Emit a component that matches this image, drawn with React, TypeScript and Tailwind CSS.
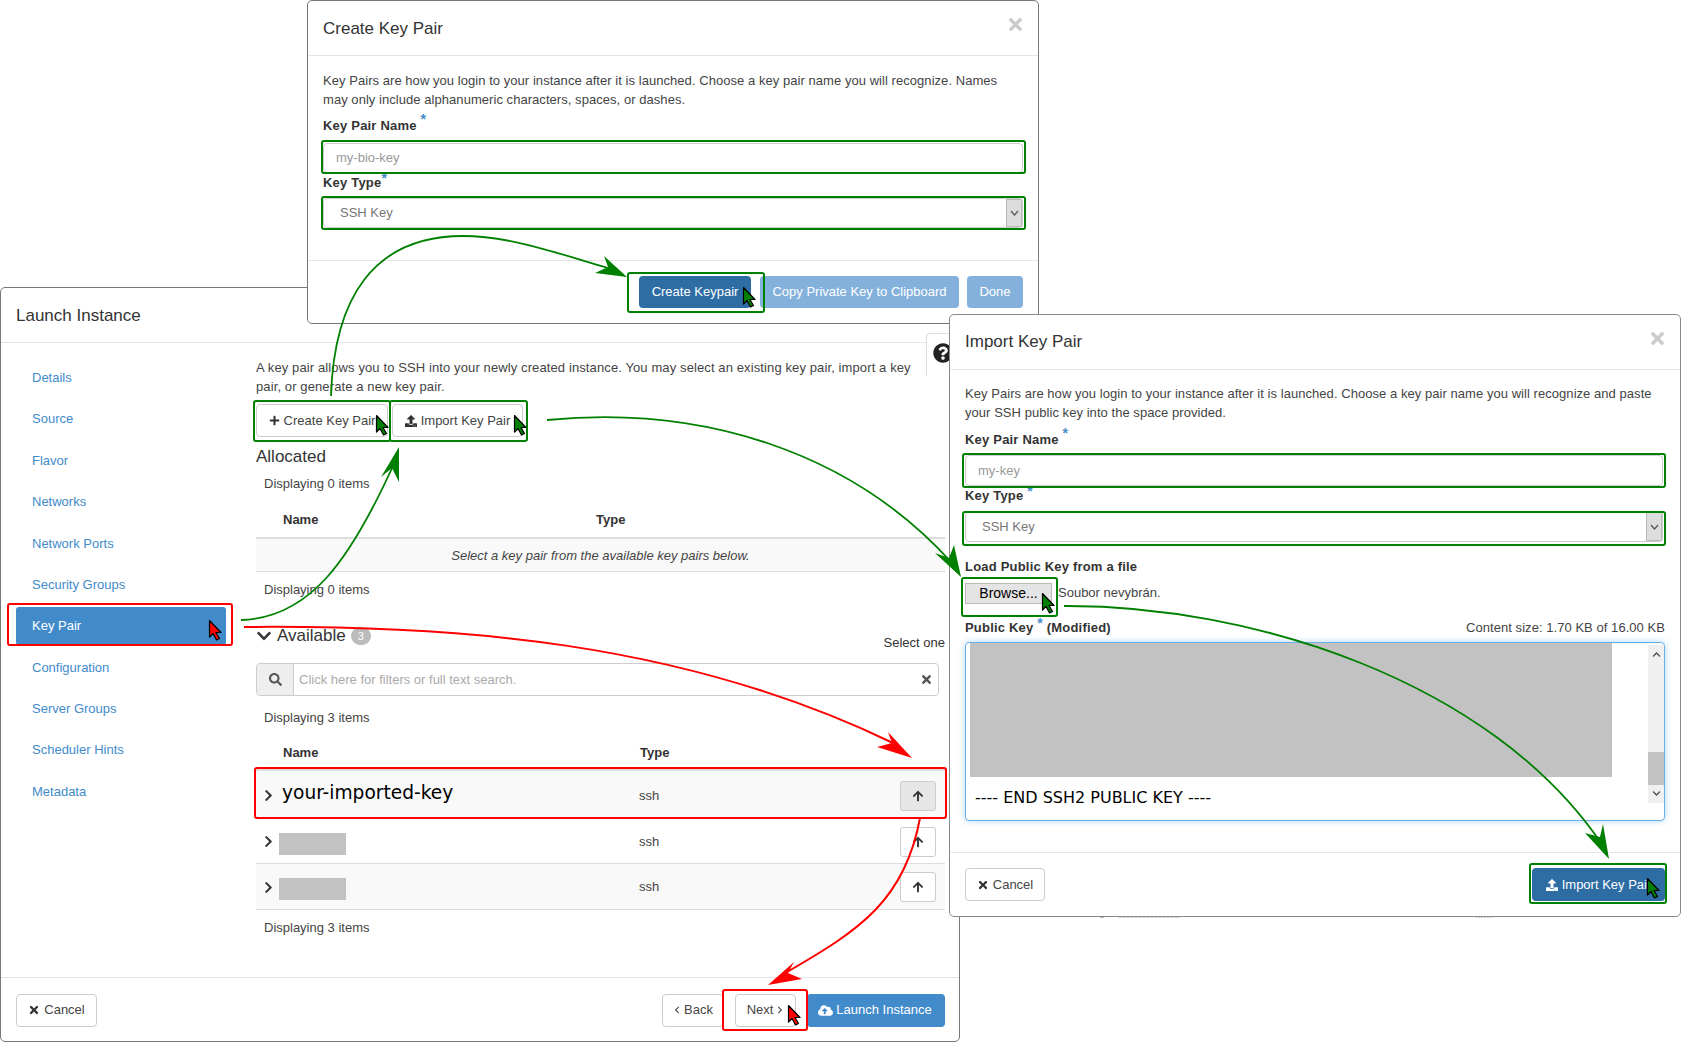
import React from "react";
import {
  FaPlus, FaUpload, FaChevronDown, FaChevronRight, FaSearch, FaTimes, FaArrowUp, FaCloudUploadAlt, FaQuestionCircle, FaChevronLeft,
} from "react-icons/fa";

const GREEN = "#008000";
const RED = "#ff0000";

function Cursor({ x, y, color }: { x: number; y: number; color: string }) {
  return (
    <g transform={`translate(${x} ${y})`}>
      <polygon points="0.5,0.5 12,12.5 7,12.5 10.5,18.5 7.5,20 4,13.5 0.5,17" fill={color} stroke="#000" strokeWidth="1.2" strokeLinejoin="round" />
    </g>
  );
}

function Box({ x, y, w, h, color }: { x: number; y: number; w: number; h: number; color: string }) {
  return <rect x={x} y={y} width={w} height={h} rx="2" fill="none" stroke={color} strokeWidth="2" />;
}

function Annotations() {
  return (
    <svg className="absolute left-0 top-0 pointer-events-none" width="1681" height="1042" viewBox="0 0 1681 1042">
      <line x1="1119" y1="917" x2="1180" y2="917" stroke="#999" strokeWidth="1" strokeDasharray="3 1" />
      <line x1="1100" y1="917" x2="1104" y2="917" stroke="#777" strokeWidth="1" />
      <line x1="1475" y1="917" x2="1494" y2="917" stroke="#999" strokeWidth="1" strokeDasharray="2 1" />

      <Box x={322} y={141} w={703} h={32} color={GREEN} />
      <Box x={322} y={197} w={703} h={32} color={GREEN} />
      <Box x={628} y={273} w={136} h={39} color={GREEN} />
      <Box x={254} y={401} w={136} h={40} color={GREEN} />
      <Box x={390} y={401} w={137} h={40} color={GREEN} />
      <Box x={963} y={454} w={702} h={33} color={GREEN} />
      <Box x={963} y={512} w={702} h={33} color={GREEN} />
      <Box x={962} y={578} w={95} h={38} color={GREEN} />
      <Box x={1530} y={864} w={136} h={39} color={GREEN} />
      <Box x={8} y={604} w={224} h={41} color={RED} />
      <Box x={255} y={768} w={691} h={50} color={RED} />
      <Box x={723} y={990} w={84} h={40} color={RED} />

      <path d="M331 396 C 334 300, 372 236, 463 236 C 510 236, 560 254, 608 268" fill="none" stroke={GREEN} strokeWidth="1.8" />
      <polygon points="627,277 604,256 608,267 595,273" fill={GREEN} />
      <path d="M241 620 C 310 618, 350 560, 393 466" fill="none" stroke={GREEN} strokeWidth="1.8" />
      <polygon points="399,447 381,477 392,468 399,482" fill={GREEN} />
      <path d="M547 420 C 700 405, 850 450, 952 563" fill="none" stroke={GREEN} strokeWidth="1.8" />
      <polygon points="961,577 954,545 949,558 935,553" fill={GREEN} />
      <path d="M1064 606 C 1250 605, 1490 680, 1601 843" fill="none" stroke={GREEN} strokeWidth="1.8" />
      <polygon points="1609,859 1603,824 1600,837 1585,833" fill={GREEN} />
      <path d="M244 627 C 450 625, 680 640, 893 743" fill="none" stroke={RED} strokeWidth="2" />
      <polygon points="912,758 888,732 892,743 877,747" fill={RED} />
      <path d="M920 818 C 905 900, 860 930, 787 972" fill="none" stroke={RED} strokeWidth="2" />
      <polygon points="768,985 794,962 788,973 802,979" fill={RED} />

      <Cursor x={376} y={415} color={GREEN} />
      <Cursor x={514} y={415} color={GREEN} />
      <Cursor x={743} y={287} color={GREEN} />
      <Cursor x={1042} y={593} color={GREEN} />
      <Cursor x={1647} y={878} color={GREEN} />
      <Cursor x={209} y={620} color={RED} />
      <Cursor x={788} y={1005} color={RED} />
    </svg>
  );
}

function Star({ className }: { className: string }) {
  return <span className={`text-[#428bca] text-[14px] leading-none align-top ${className}`}>*</span>;
}

function SelectLike({ textX }: { textX: string }) {
  return (
    <div className="flex h-full items-center bg-white rounded-sm border border-[#ccc]">
      <span className={`flex-1 text-[13px] text-[#777] ${textX}`}>SSH Key</span>
      <span className="flex h-full w-[16px] items-center justify-center bg-[#ddd] border border-[#bbb]">
        <svg width="9" height="6" viewBox="0 0 9 6"><path d="M1 1 L4.5 5 L8 1" fill="none" stroke="#555" strokeWidth="1.2" /></svg>
      </span>
    </div>
  );
}

function Btn({ children, className = "" }: { children: React.ReactNode; className?: string }) {
  return (
    <div className={`flex h-[33px] items-center justify-center rounded-[4px] border border-[#ccc] bg-white text-[13px] text-[#444] ${className}`}>
      {children}
    </div>
  );
}

function CreateWindow() {
  return (
    <section className="absolute left-[307px] top-0 flex h-[324px] w-[732px] flex-col rounded-[5px] border border-[#777] bg-white">
      <header className="relative h-[55px] shrink-0 border-b border-[#e5e5e5] pl-[15px] pt-[18px] text-[17px] leading-[20px] text-[#333]">
        Create Key Pair
        <FaTimes className="absolute right-[13px] top-[14px] text-[#ccc]" size={19} />
      </header>
      <div className="px-[15px] pt-[15px] text-[13px] text-[#444]">
        <p className="leading-[19px] tracking-[0.05px]">
          Key Pairs are how you login to your instance after it is launched. Choose a key pair name you will recognize. Names
          <br />
          may only include alphanumeric characters, spaces, or dashes.
        </p>
        <div className="mt-[8px] h-[18px] font-bold leading-[18px] tracking-[0.2px] text-[#333]">Key Pair Name <Star className="relative -top-[5px]" /></div>
        <div className="mt-[8px] flex h-[30px] w-[700px] items-center rounded-sm border border-[#ccc] pl-[12px] text-[13px] text-[#999]">my-bio-key</div>
        <div className="mt-[2px] h-[16px] font-bold leading-[16px] tracking-[0.2px] text-[#333]">Key Type<Star className="relative -top-[4px]" /></div>
        <div className="mt-[7px] h-[30px] w-[700px]"><SelectLike textX="pl-[16px]" /></div>
      </div>
      <footer className="mt-auto flex h-[63px] shrink-0 justify-end border-t border-[#e5e5e5] pr-[15px] pt-[15px] text-[13px] text-white">
        <div className="mr-[9px] flex h-[32px] w-[112px] items-center justify-center rounded-[4px] bg-[#2e6da4]">Create Keypair</div>
        <div className="mr-[8px] flex h-[32px] w-[199px] items-center justify-center rounded-[4px] bg-[#84b1dc]">Copy Private Key to Clipboard</div>
        <div className="flex h-[32px] w-[56px] items-center justify-center rounded-[4px] bg-[#84b1dc]">Done</div>
      </footer>
    </section>
  );
}

function Nav() {
  const items = ["Details", "Source", "Flavor", "Networks", "Network Ports", "Security Groups", "Key Pair", "Configuration", "Server Groups", "Scheduler Hints", "Metadata"];
  return (
    <nav className="w-[255px] shrink-0 pl-[15px] pt-[14px] text-[13px]">
      {items.map((n) =>
        n === "Key Pair" ? (
          <div key={n} className="flex h-[41.4px] items-center">
            <div className="flex h-[38px] w-[210px] items-center rounded-[3px] bg-[#428bca] pl-[16px] text-white">{n}</div>
          </div>
        ) : (
          <div key={n} className="flex h-[41.4px] items-center pl-[16px] text-[#428bca]">{n}</div>
        )
      )}
    </nav>
  );
}

function KeyRow({ name, shade, active }: { name: React.ReactNode; shade?: boolean; active?: boolean }) {
  return (
    <div className={`flex flex-1 items-center border-b border-[#ddd] ${active ? "pt-[3px]" : "pt-[1px]"} ${shade ? "bg-[#f9f9f9]" : ""}`}>
      <FaChevronRight className="ml-[6px] text-[#333]" size={13} />
      <div className="ml-[4px] w-[360px]">{name}</div>
      <div className="w-[261px] text-[13px] text-[#444]">ssh</div>
      <div className={`flex h-[30px] w-[36px] items-center justify-center rounded-[3px] border border-[#ccc] ${active ? "bg-[#e6e6e6]" : "bg-white"}`}>
        <FaArrowUp className="text-[#333]" size={12} />
      </div>
    </div>
  );
}

function Redacted() {
  return <div className="relative top-[2px] h-[22px] w-[67px] bg-[#c2c2c2]" />;
}

function LaunchWindow() {
  return (
    <section className="absolute left-0 top-[287px] flex h-[755px] w-[960px] flex-col rounded-[5px] border border-[#777] bg-white">
      <header className="h-[55px] shrink-0 border-b border-[#e5e5e5] pl-[15px] pt-[18px] text-[17px] leading-[20px] text-[#333]">Launch Instance</header>
      <div className="relative flex flex-1">
        <Nav />
        <div className="absolute right-[1px] top-[-10px] flex h-[43px] w-[32px] items-start rounded-tl-[4px] border-l border-t border-[#ddd] bg-white pl-[6px] pt-[9px]">
          <FaQuestionCircle className="text-[#222]" size={20} />
        </div>
        <div className="w-[689px] text-[13px] text-[#444]">
          <p className="pt-[15px] leading-[19px] tracking-[0.11px]">
            A key pair allows you to SSH into your newly created instance. You may select an existing key pair, import a key
            <br />
            pair, or generate a new key pair.
          </p>
          <div className="mt-[8px] flex gap-[4px]">
            <Btn className="w-[132px] gap-[4px]"><FaPlus size={11} className="text-[#333]" />Create Key Pair</Btn>
            <Btn className="w-[131px] gap-[4px]"><FaUpload size={12} className="text-[#333]" />Import Key Pair</Btn>
          </div>
          <div className="mt-[7px] h-[26px] text-[17px] leading-[26px] text-[#333]">Allocated</div>
          <div className="mt-[5px] h-[18px] pl-[8px] leading-[18px]">Displaying 0 items</div>
          <div className="flex h-[46px] border-b-2 border-[#ddd] pt-[18px] font-bold leading-[18px] text-[#333]">
            <div className="ml-[27px] w-[313px]">Name</div>
            <div>Type</div>
          </div>
          <div className="flex h-[33px] items-center justify-center border-b border-[#ddd] bg-[#f9f9f9] pt-[2px] italic text-[#444]">
            Select a key pair from the available key pairs below.
          </div>
          <div className="mt-[9px] h-[18px] pl-[8px] leading-[18px]">Displaying 0 items</div>
          <div className="mt-[24px] flex h-[26px] items-center">
            <FaChevronDown className="mr-[5px] text-[#333]" size={16} />
            <span className="text-[17px] text-[#333]">Available</span>
            <span className="ml-[5px] flex h-[18px] w-[20px] items-center justify-center rounded-full bg-[#bbb] text-[11px] text-white">3</span>
            <span className="relative top-[7px] ml-auto text-[#333]">Select one</span>
          </div>
          <div className="mt-[14px] flex h-[33px] w-[683px] items-center rounded-[4px] border border-[#ccc]">
            <div className="flex h-full w-[37px] items-center justify-center rounded-l-[4px] border-r border-[#ccc] bg-[#eee]">
              <FaSearch className="text-[#555]" size={13} />
            </div>
            <span className="flex-1 pl-[5px] text-[#aaa]">Click here for filters or full text search.</span>
            <FaTimes className="mr-[5px] text-[#555]" size={13} />
          </div>
          <div className="mt-[13px] h-[18px] pl-[8px] leading-[18px]">Displaying 3 items</div>
          <div className="flex h-[44px] border-b-2 border-[#ddd] pt-[17px] font-bold leading-[18px] text-[#333]">
            <div className="ml-[27px] w-[357px]">Name</div>
            <div>Type</div>
          </div>
          <div className="flex h-[139px] flex-col">
            <KeyRow shade active name={<span className="relative -top-[3px] left-[3px] [font-family:'DejaVu_Sans',sans-serif] text-[18.6px] text-black">your-imported-key</span>} />
            <KeyRow name={<Redacted />} />
            <KeyRow shade name={<Redacted />} />
          </div>
          <div className="mt-[9px] h-[18px] pl-[8px] leading-[18px]">Displaying 3 items</div>
        </div>
      </div>
      <footer className="flex h-[64px] shrink-0 items-center justify-between border-t border-[#e5e5e5] pl-[15px] pr-[14px] pt-[1px]">
        <Btn className="w-[81px] gap-[4px]"><FaTimes size={12} className="text-[#333]" />Cancel</Btn>
        <div className="flex">
          <Btn className="mr-[11px] w-[62px] gap-[3px]"><FaChevronLeft size={8} className="text-[#555]" />Back</Btn>
          <Btn className="mr-[11px] w-[61px] gap-[3px]">Next<FaChevronRight size={8} className="text-[#555]" /></Btn>
          <div className="flex h-[33px] w-[138px] items-center justify-center gap-[3px] rounded-[4px] bg-[#428bca] pr-[2px] text-[13px] text-white"><FaCloudUploadAlt size={15} />Launch Instance</div>
        </div>
      </footer>
    </section>
  );
}

function ImportWindow() {
  return (
    <section className="absolute left-[949px] top-[314px] flex h-[603px] w-[732px] flex-col rounded-[5px] border border-[#888] bg-white">
      <header className="relative h-[55px] shrink-0 border-b border-[#e5e5e5] pl-[15px] pt-[17px] text-[17px] leading-[20px] text-[#333]">
        Import Key Pair
        <FaTimes className="absolute right-[13px] top-[14px] text-[#ccc]" size={19} />
      </header>
      <div className="px-[15px] pt-[14px] text-[13px] text-[#444]">
        <p className="leading-[19px] tracking-[0.05px]">
          Key Pairs are how you login to your instance after it is launched. Choose a key pair name you will recognize and paste
          <br />
          your SSH public key into the space provided.
        </p>
        <div className="mt-[9px] h-[18px] font-bold leading-[18px] tracking-[0.2px] text-[#333]">Key Pair Name <Star className="relative -top-[5px]" /></div>
        <div className="mt-[6px] flex h-[31px] w-[698px] items-center rounded-sm border border-[#ccc] pl-[12px] text-[#999]">my-key</div>
        <div className="mt-[2px] h-[16px] font-bold leading-[16px] tracking-[0.2px] text-[#333]">Key Type <Star className="relative -top-[4px]" /></div>
        <div className="mt-[7px] h-[31px] w-[698px]"><SelectLike textX="pl-[16px]" /></div>
        <div className="mt-[16px] h-[18px] font-bold leading-[18px] tracking-[0.2px] text-[#333]">Load Public Key from a file</div>
        <div className="mt-[7px] flex h-[20px] items-center">
          <div className="flex h-[21px] w-[87px] items-center justify-center border border-[#bbb] bg-[#e4e4e4] text-[14px] text-black">Browse...</div>
          <span className="ml-[6px] text-[#444]">Soubor nevybrán.</span>
        </div>
        <div className="mt-[16px] flex h-[18px] justify-between leading-[18px]">
          <span className="font-bold tracking-[0.2px] text-[#333]">Public Key <Star className="relative -top-[3px]" /> (Modified)</span>
          <span className="tracking-[0.05px] text-[#444]">Content size: 1.70 KB of 16.00 KB</span>
        </div>
        <div className="relative mt-[5px] h-[179px] w-[700px] rounded-[4px] border border-[#66afe9] shadow-[0_0_6px_rgba(102,175,233,0.5)]">
          <div className="ml-[4px] h-[134px] w-[642px] bg-[#c2c2c2]" />
          <div className="mt-[11px] pl-[9px] [font-family:'DejaVu_Sans',sans-serif] text-[16px] leading-[20px] text-black">---- END SSH2 PUBLIC KEY ----</div>
          <div className="absolute right-0 top-[2px] flex h-[158px] w-[16px] flex-col items-center bg-[#f0f0f0]">
            <FaChevronDown className="mt-[5px] rotate-180 text-[#555]" size={9} />
            <div className="mt-[93px] h-[33px] w-full bg-[#c2c2c2]" />
            <FaChevronDown className="mt-[4px] text-[#555]" size={9} />
          </div>
        </div>
      </div>
      <footer className="mt-auto flex h-[64px] shrink-0 items-center justify-between border-t border-[#e5e5e5] px-[15px]">
        <Btn className="w-[80px] gap-[4px]"><FaTimes size={12} className="text-[#333]" />Cancel</Btn>
        <div className="flex h-[33px] w-[133px] items-center justify-center gap-[4px] rounded-[4px] bg-[#2e6da4] text-[13px] text-white"><FaUpload size={12} />Import Key Pair</div>
      </footer>
    </section>
  );
}

export default function App() {
  return (
    <div className="relative h-[1042px] w-[1681px] overflow-hidden bg-white [font-family:'Liberation_Sans',Arial,sans-serif]">
      <LaunchWindow />
      <CreateWindow />
      <ImportWindow />
      <Annotations />
    </div>
  );
}
